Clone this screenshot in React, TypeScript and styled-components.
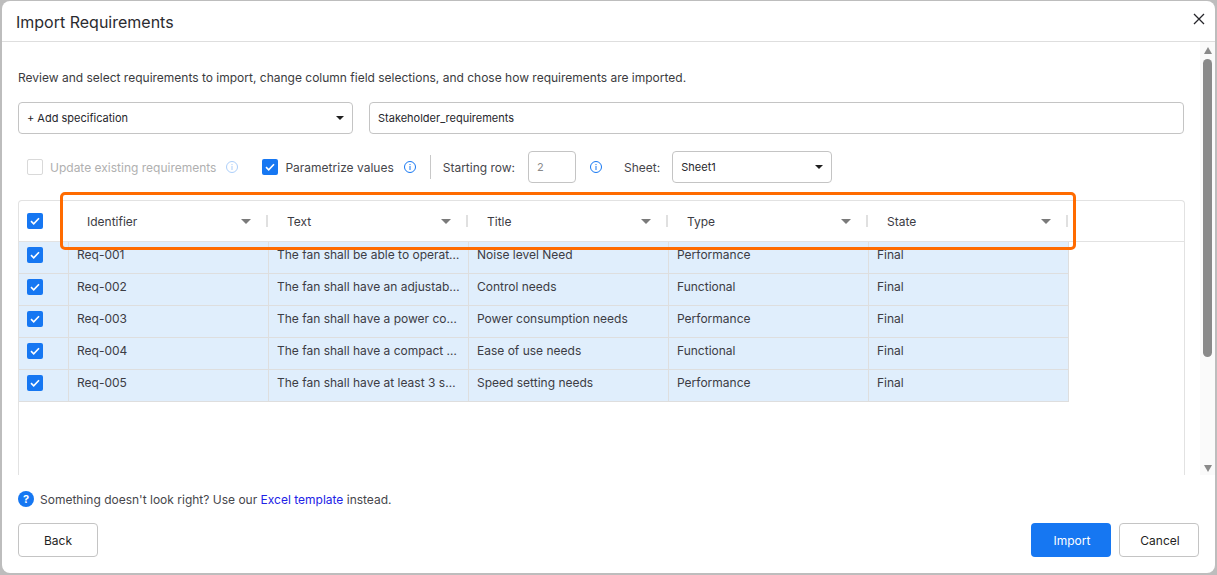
import React from "react";
import styled, { createGlobalStyle } from "styled-components";

const Global = createGlobalStyle`
  html, body { margin: 0; padding: 0; background: #b9b9b9; }
  * { box-sizing: border-box; }
  body { font-family: Inter, "Liberation Sans", sans-serif; color: #26262b; }
`;
const Page = styled.div`
  width: 1217px; height: 575px; padding: 1px 2px 2px 2px; overflow: hidden;
  background: #bdbdbd;
`;
const Dialog = styled.div`
  width: 100%; height: 100%; background: #fff; border-radius: 8px;
  display: flex; flex-direction: column; overflow: hidden;
`;
const Header = styled.header`
  height: 41px; flex: none; display: flex; align-items: center; justify-content: space-between;
  padding: 0 8px 0 14px; border-bottom: 1px solid #dedede;
`;
const Title = styled.h1`
  margin: 2px 0 0; font-size: 16px; font-weight: 400; color: #2b2b30;
`;
const CloseBtn = styled.button`
  border: 0; background: none; padding: 0; width: 14px; height: 14px; display: flex; margin-top: -3px;
`;
const Body = styled.div`
  height: 433px; flex: none; display: flex; overflow: hidden;
`;
const Content = styled.div`
  flex: 1; min-width: 0; padding: 27px 16px 0 16px; position: relative;
`;
const Intro = styled.p`
  margin: 0 0 16px; height: 17px; line-height: 17px; font-size: 12px; color: #3b3b40;
`;
const TopRow = styled.div`
  display: flex; gap: 16px; margin-bottom: 17px;
`;
const SelectBox = styled.div<{ $w?: number; $ml?: number }>`
  ${(p) => (p.$w ? `width:${p.$w}px;flex:none;` : "flex:1;")}
  margin-left: ${(p) => p.$ml ?? 0}px;
  height: 32px; border: 1px solid #c4c4c4; border-radius: 4px; background: #fff;
  display: flex; align-items: center; justify-content: space-between; padding: 0 8px;
  font-size: 11px; color: #26262b;
`;
const Caret = styled.span`
  width: 0; height: 0; border-left: 4px solid transparent; border-right: 4px solid transparent;
  border-top: 4px solid #1f1f1f; flex: none;
`;
const HeadCaret = styled.span`
  width: 0; height: 0; border-left: 5px solid transparent; border-right: 5px solid transparent;
  border-top: 5px solid #7a7a7a; flex: none;
`;
const Options = styled.div`
  display: flex; align-items: center; height: 32px; padding-left: 9px;
  font-size: 12px; color: #46464b; margin-bottom: 17px;
`;
const Check = styled.span<{ $on?: boolean; $ml?: number }>`
  width: 16px; height: 16px; flex: none; border-radius: 2px; display: inline-flex; align-items: center; justify-content: center;
  margin-left: ${(p) => p.$ml ?? 0}px;
  background: ${(p) => (p.$on ? "#1677f2" : "#fff")};
  border: ${(p) => (p.$on ? "0" : "1px solid #d9d9d9")};
`;
const OptText = styled.span<{ $muted?: boolean; $ml: number }>`
  margin-left: ${(p) => p.$ml}px; white-space: nowrap; color: ${(p) => (p.$muted ? "#b0b0b0" : "#46464b")};
`;
const InfoWrap = styled.span<{ $ml: number; $faded?: boolean }>`
  margin-left: ${(p) => p.$ml}px; display: inline-flex; opacity: ${(p) => (p.$faded ? 0.35 : 1)};
`;
const Divider = styled.span`
  width: 1px; height: 24px; background: #c8c8c8; margin-left: 14px;
`;
const NumberBox = styled.div`
  width: 48px; height: 32px; margin-left: 13px; border: 1px solid #c4c4c4; border-radius: 4px;
  font-size: 11px; color: #8a8a8a; display: flex; align-items: center; padding-left: 8px;
`;
const Table = styled.div`
  width: 1167px; height: 300px; border: 1px solid #e2e2e2; border-bottom: 0; border-radius: 4px 4px 0 0;
`;
const HeadRow = styled.div`
  height: 41px; display: flex; align-items: center; border-bottom: 1px solid #e2e2e2;
`;
const HeadCheck = styled.div`
  width: 49px; flex: none; padding-left: 8px; display: flex;
`;
const HeadCell = styled.div`
  width: 200px; flex: none; height: 100%; display: flex; align-items: center; position: relative;
  padding: 0 17px 0 19px; justify-content: space-between; font-size: 12px; color: #3c3c44;
  &::after { content: ""; position: absolute; right: 0; top: 14px; width: 2px; height: 12px; background: #e0e0e0; }
`;
const Row = styled.div`
  height: 32px; width: 1050px; display: flex; background: #e0eefc; border-bottom: 1px solid #dedede;
`;
const CheckCell = styled.div`
  width: 50px; flex: none; padding: 5px 0 0 8px; display: flex; align-items: flex-start; border-right: 1px solid #dedede;
`;
const Cell = styled.div`
  width: 200px; flex: none; padding: 0 8px; border-right: 1px solid #dedede; font-size: 12px; color: #3c3c44;
  line-height: 26px; white-space: nowrap; overflow: hidden;
`;
const Clip = styled.span`
  display: block; overflow: hidden; text-overflow: ellipsis;
`;
const Highlight = styled.div`
  position: absolute; left: 58px; top: 150px; width: 1016px; height: 58px;
  border: 3px solid #ff6b00; border-radius: 5px; pointer-events: none;
`;
const Scrollbar = styled.div`
  width: 15px; flex: none; background: #fafafa; display: flex; flex-direction: column; align-items: center;
  padding: 5px 0 3px 0;
`;
const Thumb = styled.div`
  width: 9px; height: 298px; background: #8a8a8a; border-radius: 5px; margin-top: 5px;
`;
const Arrow = styled.span<{ $up?: boolean }>`
  width: 0; height: 0; border-left: 4.5px solid transparent; border-right: 4.5px solid transparent;
  ${(p) => (p.$up ? "border-bottom: 7px solid #8a8a8a;" : "border-top: 7px solid #8a8a8a; margin-top: auto;")}
`;
const Help = styled.div`
  height: 48px; flex: none; display: flex; align-items: center; padding: 0 0 0 16px; gap: 6px;
  font-size: 12px; color: #46464b;
`;
const Link = styled.a`
  color: #2222e6; text-decoration: none;
`;
const Footer = styled.footer`
  display: flex; align-items: flex-start; padding: 0 16px;
`;
const Btn = styled.button<{ $primary?: boolean; $inset?: number }>`
  width: 80px; height: 34px; border-radius: 4px; font: 400 12px Inter, sans-serif;
  padding: 0 0 0 ${(p) => p.$inset ?? 0}px;
  background: ${(p) => (p.$primary ? "#1677f2" : "#fff")};
  color: ${(p) => (p.$primary ? "#fff" : "#1f1f24")};
  border: ${(p) => (p.$primary ? "0" : "1px solid #c4c4c4")};
`;
const Spacer = styled.div`flex: 1;`;
const Gap = styled.div`width: 8px;`;

const Tick = () => (
  <svg width="10" height="8" viewBox="0 0 10 8" fill="none">
    <path d="M1 4.2 3.7 6.8 9 1.2" stroke="#fff" strokeWidth="1.6" />
  </svg>
);
const Info = () => (
  <svg width="12" height="12" viewBox="0 0 12 12" fill="none">
    <circle cx="6" cy="6" r="5.5" stroke="#1677f2" />
    <rect x="5.5" y="5" width="1" height="4" fill="#1677f2" />
    <rect x="5.5" y="3" width="1" height="1.1" fill="#1677f2" />
  </svg>
);

const rows = [
  ["Req-001", "The fan shall be able to operate at a low noise", "Noise level Need", "Performance"],
  ["Req-002", "The fan shall have an adjustable height", "Control needs", "Functional"],
  ["Req-003", "The fan shall have a power consumption", "Power consumption needs", "Performance"],
  ["Req-004", "The fan shall have a compact design overall", "Ease of use needs", "Functional"],
  ["Req-005", "The fan shall have at least 3 speed settings", "Speed setting needs", "Performance"],
];
const heads = ["Identifier", "Text", "Title", "Type", "State"];

export default function App() {
  return (
    <Page>
      <Global />
      <Dialog>
        <Header>
          <Title>Import Requirements</Title>
          <CloseBtn aria-label="Close">
            <svg width="12" height="12" viewBox="0 0 12 12" fill="none">
              <path d="M1 1l10 10M11 1 1 11" stroke="#26262b" strokeWidth="1.3" />
            </svg>
          </CloseBtn>
        </Header>
        <Body>
          <Content>
            <Intro>Review and select requirements to import, change column field selections, and chose how requirements are imported.</Intro>
            <TopRow>
              <SelectBox $w={335}>+ Add specification<Caret /></SelectBox>
              <SelectBox>Stakeholder_requirements</SelectBox>
            </TopRow>
            <Options>
              <Check />
              <OptText $muted $ml={7}>Update existing requirements</OptText>
              <InfoWrap $ml={10} $faded><Info /></InfoWrap>
              <Check $on $ml={24}><Tick /></Check>
              <OptText $ml={7}>Parametrize values</OptText>
              <InfoWrap $ml={10}><Info /></InfoWrap>
              <Divider />
              <OptText $ml={12}>Starting row:</OptText>
              <NumberBox>2</NumberBox>
              <InfoWrap $ml={14}><Info /></InfoWrap>
              <OptText $ml={22}>Sheet:</OptText>
              <SelectBox $w={160} $ml={12}>Sheet1<Caret /></SelectBox>
            </Options>
            <Table>
              <HeadRow>
                <HeadCheck><Check $on><Tick /></Check></HeadCheck>
                {heads.map((h) => (
                  <HeadCell key={h}>{h}<HeadCaret /></HeadCell>
                ))}
              </HeadRow>
              {rows.map((r) => (
                <Row key={r[0]}>
                  <CheckCell><Check $on><Tick /></Check></CheckCell>
                  <Cell>{r[0]}</Cell>
                  <Cell><Clip>{r[1]}</Clip></Cell>
                  <Cell>{r[2]}</Cell>
                  <Cell>{r[3]}</Cell>
                  <Cell>Final</Cell>
                </Row>
              ))}
            </Table>
            <Highlight />
          </Content>
          <Scrollbar>
            <Arrow $up />
            <Thumb />
            <Arrow />
          </Scrollbar>
        </Body>
        <Help>
          <svg width="16" height="16" viewBox="0 0 16 16">
            <circle cx="8" cy="8" r="8" fill="#1677f2" />
            <text x="8" y="12" textAnchor="middle" fontSize="11" fontWeight="700" fill="#fff" fontFamily="Inter, sans-serif">?</text>
          </svg>
          <span>Something doesn't look right? Use our <Link>Excel template</Link> instead.</span>
        </Help>
        <Footer>
          <Btn>Back</Btn>
          <Spacer />
          <Btn $primary $inset={2}>Import</Btn>
          <Gap />
          <Btn $inset={2}>Cancel</Btn>
        </Footer>
      </Dialog>
    </Page>
  );
}
